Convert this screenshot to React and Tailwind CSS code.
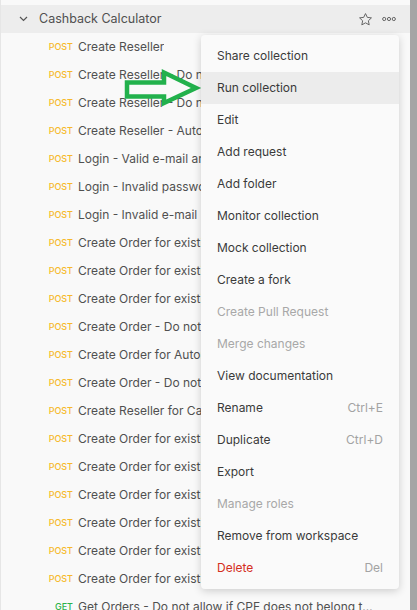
import React from "react";

const requests = [
  ["POST", "Create Reseller"],
  ["POST", "Create Reseller - Do not allow duplicated CPF"],
  ["POST", "Create Reseller - Do not allow duplicated e-mail"],
  ["POST", "Create Reseller - Automatic approval"],
  ["POST", "Login - Valid e-mail and password"],
  ["POST", "Login - Invalid password"],
  ["POST", "Login - Invalid e-mail"],
  ["POST", "Create Order for existing reseller"],
  ["POST", "Create Order for existing reseller 2"],
  ["POST", "Create Order for existing reseller 3"],
  ["POST", "Create Order - Do not allow invalid CPF"],
  ["POST", "Create Order for Automatic approval"],
  ["POST", "Create Order - Do not allow duplicated code"],
  ["POST", "Create Reseller for Cashback"],
  ["POST", "Create Order for existing reseller 4"],
  ["POST", "Create Order for existing reseller 5"],
  ["POST", "Create Order for existing reseller 6"],
  ["POST", "Create Order for existing reseller 7"],
  ["POST", "Create Order for existing reseller 8"],
  ["POST", "Create Order for existing reseller 9"],
  ["GET", "Get Orders - Do not allow if CPF does not belong to reseller"],
];

const menu = [
  { label: "Share collection" },
  { label: "Run collection", active: true },
  { label: "Edit" },
  { label: "Add request" },
  { label: "Add folder" },
  { label: "Monitor collection" },
  { label: "Mock collection" },
  { label: "Create a fork" },
  { label: "Create Pull Request", disabled: true },
  { label: "Merge changes", disabled: true },
  { label: "View documentation" },
  { label: "Rename", key: "Ctrl+E" },
  { label: "Duplicate", key: "Ctrl+D" },
  { label: "Export" },
  { label: "Manage roles", disabled: true },
  { label: "Remove from workspace" },
  { label: "Delete", key: "Del", danger: true },
];

export default function App() {
  return (
    <div className="relative flex h-[610px] w-[417px] overflow-hidden bg-[#f9f9f9] font-['Inter',sans-serif] text-[12px]">
      <div className="min-w-0 flex-1 border-l border-[#e6e6e6] pt-[5px]">
        {/* collection header */}
        <div className="flex h-[28px] items-center bg-[#ededed] pr-[14px]">
          <svg className="ml-[18px] mr-[11px]" width="9" height="6" viewBox="0 0 9 6">
            <path d="M1 1l3.5 3.5L8 1" fill="none" stroke="#555" strokeWidth="1.2" />
          </svg>
          <span className="flex-1 text-[12.5px] text-[#505050]">Cashback Calculator</span>
          <svg width="15" height="15" viewBox="0 0 24 24" className="mr-[9px]">
            <path d="M12 2.5l2.9 6.1 6.6.8-4.9 4.6 1.3 6.6L12 17.3l-5.9 3.3 1.3-6.6-4.9-4.6 6.6-.8z" fill="none" stroke="#666" strokeWidth="1.6" strokeLinejoin="round" />
          </svg>
          <svg width="14" height="6" viewBox="0 0 14 6">
            <circle cx="2.2" cy="3" r="1.6" fill="none" stroke="#666" strokeWidth="1" />
            <circle cx="7" cy="3" r="1.6" fill="none" stroke="#666" strokeWidth="1" />
            <circle cx="11.8" cy="3" r="1.6" fill="none" stroke="#666" strokeWidth="1" />
          </svg>
        </div>

        {requests.map(([method, name], i) => (
          <div key={i} className="flex h-[28px] items-center pr-[34px]">
            <span
              className={
                method === "GET"
                  ? "w-[77px] shrink-0 pr-[5px] text-right text-[9px] font-medium text-[#2db34a]"
                  : "w-[77px] shrink-0 pr-[5px] text-right text-[9px] font-medium text-[#f6b92b]"
              }
            >
              {method}
            </span>
            <span className="min-w-0 truncate text-[#505050]">{name}</span>
          </div>
        ))}
      </div>
      <div className="w-[7px] shrink-0 bg-[#a5a5a5]" />

      {/* green arrow annotation */}
      <svg className="absolute left-[120px] top-[62px]" width="85" height="45" viewBox="0 0 85 45">
        <path d="M7 20.5H44V10.5L76 26L44 41V34.5H7Z" fill="none" stroke="#22b14c" strokeWidth="4.5" strokeLinejoin="miter" strokeMiterlimit="3" />
      </svg>

      {/* context menu */}
      <div className="absolute left-[201px] top-[35px] w-[198px] rounded-[4px] bg-[#fafafa] py-[5px] shadow-[0_2px_8px_rgba(0,0,0,0.18)]">
        {menu.map((item) => (
          <div
            key={item.label}
            className={
              item.active
                ? "flex h-[32px] items-center justify-between bg-[#ececec] px-[16px]"
                : "flex h-[32px] items-center justify-between px-[16px]"
            }
          >
            <span
              className={
                item.danger
                  ? "text-[#d42e22]"
                  : item.disabled
                  ? "text-[#a8a8a8]"
                  : "text-[#3a3a3a]"
              }
            >
              {item.label}
            </span>
            {item.key && <span className="text-[#a3a3a3]">{item.key}</span>}
          </div>
        ))}
      </div>
    </div>
  );
}
